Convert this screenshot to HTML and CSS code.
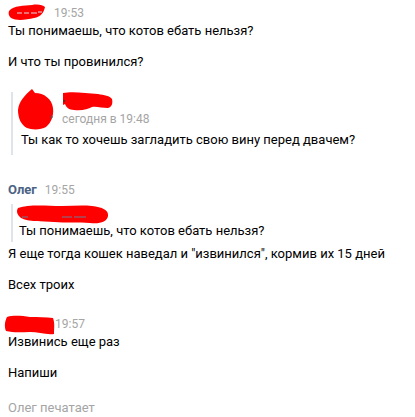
FILE: index.html
```html
<!DOCTYPE html>
<html lang="ru">
<head>
    <meta charset="utf-8">
    <title>Диалог</title>
    <link rel="stylesheet" href="styles.css">
</head>
<body>
    <div class="chat">
        <div class="group first">
            <div class="head">
                <svg class="blot blot-top" width="40" height="18" viewBox="0 0 40 18">
                    <path d="M1 8 C6 2 16 3 24 2 C30 1 35 2 37 4 C36 9 33 14 26 15 C18 17 8 18 3 15 C1 13 0 11 1 8 Z" fill="#ff0000"/>
                    <path d="M9 10 H14 M16 10 H21 M23 10 H29 M30 9 H34" stroke="#d8dde6" stroke-width="1"/>
                </svg>
                <span class="time">19:53</span>
            </div>
            <div class="msg">Ты понимаешь, что котов ебать нельзя?</div>
            <div class="msg">И что ты провинился?</div>
            <div class="msg msg-fwd">
                <div class="fwd fwd-big">
                    <div class="fwd-author">
                        <svg class="avatar" width="37" height="41" viewBox="0 0 37 41">
                            <path d="M14 0 L17 4 C26 4 34 10 35 19 C36 27 33 34 28 38 C23 41 14 41 9 39 C3 36 0 29 0 21 C1 12 7 6 14 0 Z" fill="#ff0000"/>
                            <path d="M33 26 L35 28 L33 30 Z" fill="#555"/>
                        </svg>
                        <div class="fwd-meta">
                            <svg class="blot" width="52" height="21" viewBox="0 0 52 21">
                                <path d="M1 2 C10 0 24 2 36 3 C42 4 48 5 50 8 C51 12 50 16 46 17 C40 17 34 15 30 16 C26 18 20 20 12 19 C7 19 4 16 3 13 L1 14 Z" fill="#ff0000"/>
                                <path d="M1 9 L3 9 L2 12 Z" fill="#333"/>
                            </svg>
                            <div class="time">сегодня в 19:48</div>
                        </div>
                    </div>
                    <div class="fwd-text">Ты как то хочешь загладить свою вину перед двачем?</div>
                </div>
            </div>
        </div>

        <div class="group second">
            <div class="head">
                <span class="name">Олег</span>
                <span class="time">19:55</span>
            </div>
            <div class="fwd fwd-small">
                <svg class="blot" width="94" height="21" viewBox="0 0 94 21">
                    <path d="M2 4 C14 0 30 2 46 2 C56 2 66 1 76 2 C86 3 93 6 92 12 C91 18 84 20 74 19 C62 18 50 19 38 18 C26 17 12 18 5 14 C1 11 0 7 2 4 Z" fill="#ff0000"/>
                    <path d="M6 13 H12 M46 13 H56 M58 13 H70" stroke="#6a7d97" stroke-width="1"/>
                </svg>
                <div class="fwd-text">Ты понимаешь, что котов ебать нельзя?</div>
            </div>
            <div class="msg">Я еще тогда кошек наведал и "извинился", кормив их 15 дней</div>
            <div class="msg">Всех троих</div>
        </div>

        <div class="group third">
            <div class="head">
                <svg class="blot blot-left" width="51" height="20" viewBox="0 0 51 20">
                    <path d="M3 2 C10 0 18 1 26 2 C34 2 42 2 49 3 C51 8 50 14 50 19 C42 20 34 17 26 17 C18 17 10 18 2 16 C0 11 1 6 3 2 Z" fill="#ff0000"/>
                </svg>
                <span class="time">19:57</span>
            </div>
            <div class="msg">Извинись еще раз</div>
            <div class="msg">Напиши</div>
        </div>

        <div class="typing">Олег печатает</div>
    </div>
</body>
</html>
```

FILE: styles.css
```css
body {
    margin: 0;
    font-family: Roboto, 'Liberation Sans', Arial, sans-serif;
    font-size: 13px;
    color: #000;
    background: #fff;
}
.chat {
    padding: 4px 8px 0 8px;
}
.group.second {
    margin-top: 26px;
}
.group.third {
    margin-top: 21px;
}
.head {
    display: flex;
    align-items: center;
    height: 18px;
    line-height: 18px;
}
.head .blot {
    margin-right: 6px;
}
.head .blot-top {
    margin-top: -2px;
}
.head .blot-left {
    margin-left: -4px;
    margin-right: 0;
    margin-top: 2px;
}
.name {
    color: #4c6384;
    font-weight: bold;
    margin-right: 8px;
}
.time {
    color: #a5a5a5;
    font-size: 12px;
}
.msg {
    line-height: 18px;
    margin-bottom: 13px;
}
.msg-fwd {
    margin-top: 21px;
}
.fwd {
    border-left: 2px solid #dfe4ea;
    margin-left: 3px;
}
.fwd-big {
    padding: 0 0 6px 5px;
}
.fwd-author {
    display: flex;
    align-items: flex-start;
    height: 39px;
}
.avatar {
    margin-top: -3px;
    flex-shrink: 0;
}
.fwd-meta {
    margin-left: 7px;
    display: flex;
    flex-direction: column;
}
.fwd-meta .blot {
    margin-top: -1px;
}
.fwd-meta .time {
    line-height: 18px;
    margin-top: -2px;
}
.fwd-big .fwd-text {
    line-height: 18px;
    padding-left: 3px;
}
.fwd-small {
    margin-top: 7px;
    margin-bottom: 3px;
    padding: 0 0 2px 3px;
}
.fwd-small .blot {
    display: block;
    margin-top: -2px;
}
.fwd-small .fwd-text {
    line-height: 18px;
    margin-top: -3px;
    padding-left: 3px;
}
.typing {
    color: #a5a5a5;
    line-height: 18px;
    margin-top: 17px;
}
```
